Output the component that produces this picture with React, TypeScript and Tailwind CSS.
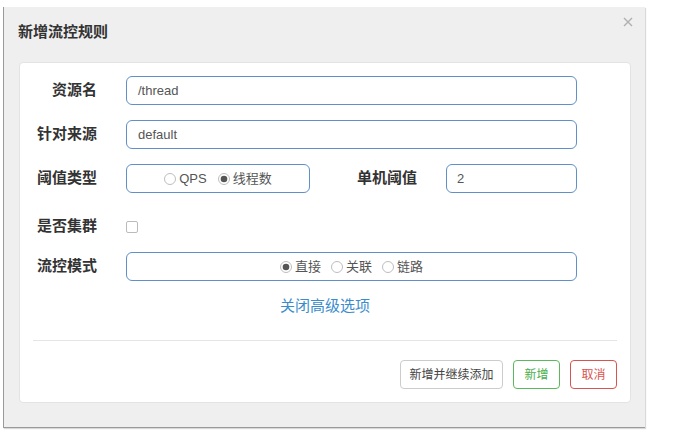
import React from 'react';

const font = "font-['Liberation_Sans','Noto_Sans_CJK_SC',sans-serif]";

const Radio = ({ checked, label }: { checked?: boolean; label: string }) => (
  <span className="inline-flex items-center">
    <svg width="12" height="12" viewBox="0 0 12 12" className="mr-[3px]">
      <circle cx="6" cy="6" r="5.5" fill="#fff" stroke="#bdbdbd" />
      {checked && <circle cx="6" cy="6" r="3.3" fill="#555" />}
    </svg>
    <span>{label}</span>
  </span>
);

const Label = ({ children, w = 'w-[77px]' }: { children: React.ReactNode; w?: string }) => (
  <div className={`${w} shrink-0 text-right text-[15px] font-bold text-[#333]`}>{children}</div>
);

const inputCls =
  'h-[29px] border border-[#5f91c8] rounded-[6px] flex items-center text-[13px] text-[#555]';

export default function App() {
  return (
    <div className={`min-h-screen bg-white pl-[3px] pt-[7px] ${font}`}>
      <div className="relative w-[642px] h-[421px] bg-[#efefef] border-l border-b border-[#9a9a9a] shadow-[1px_1px_1px_rgba(0,0,0,0.15)] flex flex-col">
        {/* header */}
        <div className="h-[49px] pl-[14px] pt-[1px] flex items-center">
          <h3 className="text-[15px] font-bold text-[#333]">新增流控规则</h3>
        </div>
        <button className="absolute right-[12px] top-[10px] w-[10px] h-[10px]">
          <svg width="10" height="10" viewBox="0 0 10 10">
            <path d="M1 1 L9 9 M9 1 L1 9" stroke="#b0b0b0" strokeWidth="1.4" />
          </svg>
        </button>

        {/* body */}
        <div className="ml-[15px] mt-[6px] w-[612px] h-[341px] bg-white border border-[#e3e3e3] rounded-[4px] flex flex-col pt-[13px]">
          <div className="flex items-center">
            <Label>资源名</Label>
            <div className={`${inputCls} ml-[29px] w-[451px] pl-[11px]`}>/thread</div>
          </div>
          <div className="flex items-center mt-[15px]">
            <Label>针对来源</Label>
            <div className={`${inputCls} ml-[29px] w-[451px] pl-[11px]`}>default</div>
          </div>
          <div className="flex items-center mt-[15px]">
            <Label>阈值类型</Label>
            <div className={`${inputCls} ml-[29px] w-[184px] justify-center gap-[11px]`}>
              <Radio label="QPS" />
              <Radio checked label="线程数" />
            </div>
            <Label w="w-[107px]">单机阈值</Label>
            <div className={`${inputCls} ml-[29px] w-[131px] pl-[10px]`}>2</div>
          </div>
          <div className="flex items-center mt-[19px] h-[29px]">
            <Label>是否集群</Label>
            <span className="ml-[29px] w-[12px] h-[12px] border border-[#bbb] rounded-[2px] bg-white" />
          </div>
          <div className="flex items-center mt-[11px]">
            <Label>流控模式</Label>
            <div className={`${inputCls} ml-[29px] w-[451px] justify-center gap-[10px]`}>
              <Radio checked label="直接" />
              <Radio label="关联" />
              <Radio label="链路" />
            </div>
          </div>
          <div className="mt-[15px] text-center text-[15px] leading-[20px] text-[#3a8ccd]">关闭高级选项</div>
          <div className="mt-[24px] mx-[13px] border-t border-[#e5e5e5]" />
          <div className="mt-[19px] pr-[13px] flex justify-end gap-[10px] text-[12px]">
            <button className="w-[103px] h-[29px] border border-[#ccc] rounded-[4px] text-[#444] bg-white">新增并继续添加</button>
            <button className="w-[47px] h-[29px] border border-[#5cb85c] rounded-[4px] text-[#4cae4c] bg-white">新增</button>
            <button className="w-[47px] h-[29px] border border-[#d9534f] rounded-[4px] text-[#d9534f] bg-white">取消</button>
          </div>
        </div>
      </div>
    </div>
  );
}
